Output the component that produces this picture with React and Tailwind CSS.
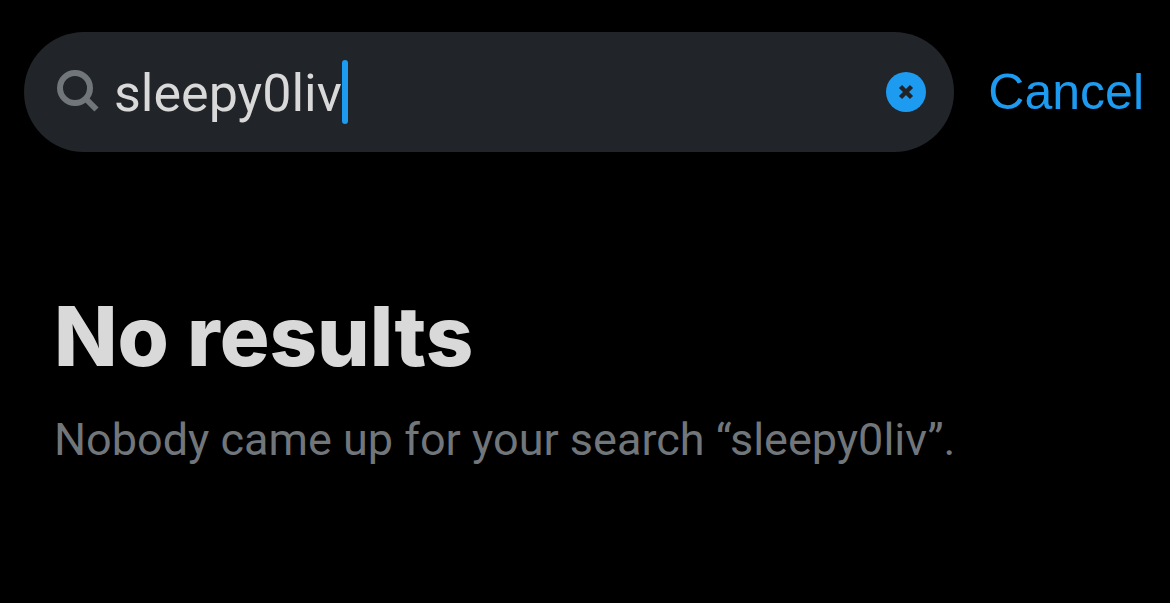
import { useState } from "react";

function SearchIcon() {
  return (
    <svg viewBox="0 0 44 44" className="h-11 w-11 shrink-0" fill="none" stroke="#71767b" aria-hidden="true">
      <circle cx="19" cy="18" r="15" strokeWidth="6" />
      <path d="M29 28 L40.5 39.5" strokeWidth="6" />
    </svg>
  );
}

function ClearIcon() {
  return (
    <svg viewBox="0 0 40 40" className="h-10 w-10" aria-hidden="true">
      <circle cx="20" cy="20" r="20" fill="#1d9bf0" />
      <path d="M14.5 14.5 L25.5 25.5 M25.5 14.5 L14.5 25.5" stroke="#212327" strokeWidth="4.4" />
    </svg>
  );
}

export default function App() {
  const [query, setQuery] = useState("sleepy0liv");
  return (
    <div className="min-h-screen bg-black font-[Roboto,sans-serif]">
      <header className="flex items-center gap-[34px] py-8 pr-[26px] pl-6">
        <div className="flex h-30 min-w-0 flex-1 items-center rounded-full bg-[#212428] pr-7 pl-8">
          <SearchIcon />
          <input
            type="text"
            aria-label="Search"
            value={query}
            onChange={(e) => setQuery(e.target.value)}
            className="ml-3.5 [field-sizing:content] min-w-0 bg-transparent pt-1 text-[52px] leading-16 text-[#d9d9d9] caret-transparent outline-none"
          />
          <span className="h-16 w-1.5 shrink-0 rounded-full bg-[#1d9bf0]" aria-hidden="true" />
          <button type="button" aria-label="Clear search" onClick={() => setQuery("")} className="ml-auto shrink-0">
            <ClearIcon />
          </button>
        </div>
        <button
          type="button"
          className="shrink-0 font-['Liberation_Sans',sans-serif] text-[50px] leading-16 text-[#1d9bf0]"
        >
          Cancel
        </button>
      </header>
      <main className="px-[54px] pt-25">
        <h1 className="font-[Inter,sans-serif] text-[83px] leading-26 font-extrabold text-[#d9d9d9]">No results</h1>
        <p className="mt-6 text-[45px] leading-14 text-[#71767b]">Nobody came up for your search “{query}”.</p>
      </main>
    </div>
  );
}
